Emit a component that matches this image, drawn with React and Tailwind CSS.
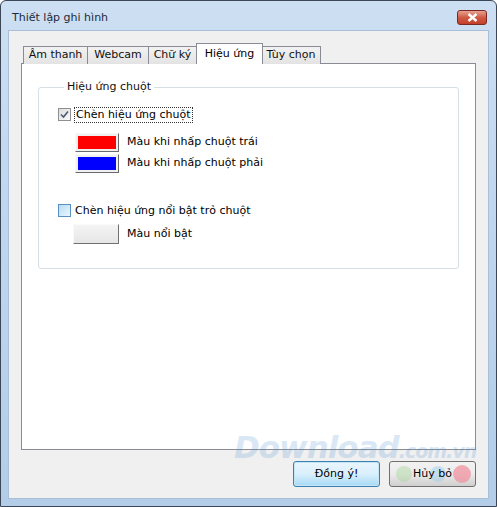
import React from 'react';

const font = { fontFamily: '"DejaVu Sans", "Liberation Sans", sans-serif' };

const CheckBox = ({ checked }) => (
  <div
    className={
      checked
        ? 'w-[13px] h-[13px] border border-[#8f8f8f] bg-gradient-to-br from-[#dcdcdc] to-[#fbfbfb] flex items-center justify-center'
        : 'w-[13px] h-[13px] border border-[#5a8fc4] bg-gradient-to-br from-[#b7dcf3] to-[#eaf6fd] p-[2px]'
    }
  >
    {checked && (
      <svg width="9" height="9" viewBox="0 0 9 9">
        <path d="M1 4.5 L3.5 7 L8 1.5" fill="none" stroke="#4a5a76" strokeWidth="1.6" />
      </svg>
    )}
  </div>
);

const ColorButton = ({ color }) => (
  <div className="w-[44px] h-[19px] border border-t-[#f8f8f8] border-l-[#f8f8f8] border-r-[#6a6a6a] border-b-[#6a6a6a] bg-[#f0f0f0] p-[2px]">
    <div className={'w-full h-full ' + color} />
  </div>
);

const tabs = [
  { label: 'Âm thanh', w: 'w-[65px]' },
  { label: 'Webcam', w: 'w-[62px]' },
  { label: 'Chữ ký', w: 'w-[49px]' },
  { label: 'Hiệu ứng', w: 'w-[67px]', active: true },
  { label: 'Tùy chọn', w: 'w-[60px]' },
];

export default function App() {
  return (
    <div className="w-[497px] h-[507px] bg-white" style={font}>
      <div className="relative w-[497px] h-[507px] flex flex-col rounded-t-[6px] border border-[#3b4656] bg-gradient-to-b from-[#cddff2] via-[#bed5ee] to-[#b3cde8]">
        {/* title bar */}
        <div className="h-[29px] flex items-start justify-between pl-[11px] pr-[9px] pt-[10px]">
          <span className="text-[11px] leading-[14px] text-[#1e2a3a]">Thiết lập ghi hình</span>
          <div className="w-[30px] h-[15px] -mt-px rounded-[3px] border border-[#7a2a22] bg-gradient-to-b from-[#e6a192] via-[#cf5b45] to-[#c3402a] flex items-center justify-center">
            <svg width="11" height="9" viewBox="0 0 11 9">
              <path d="M1.5 1 L9.5 8 M9.5 1 L1.5 8" stroke="white" strokeWidth="2.4" />
            </svg>
          </div>
        </div>

        {/* client area */}
        <div className="relative flex-1 mx-[7px] mb-[7px] bg-[#f0f0f0] border border-[#a7bfd8] flex flex-col px-[12px] pt-[12px]">
          {/* watermark */}
          <div className="absolute z-20 left-[225px] top-[403px] leading-[26px] text-[31px] font-bold italic tracking-[-1px] text-[#4a8cd0] opacity-20 pointer-events-none select-none">
            Download<span className="text-[19px]">.com.vn</span>
          </div>

          {/* tabs */}
          <div className="flex items-end h-[21px] pl-[2px] relative z-10">
            {tabs.map((t) => (
              <div
                key={t.label}
                className={
                  t.active
                    ? t.w + ' h-[21px] -mx-[1px] border border-b-0 border-[#898c95] bg-white text-[11px] text-black flex justify-center pt-[2px] relative z-10'
                    : t.w + ' h-[18px] border border-b-0 border-[#898c95] bg-gradient-to-b from-[#f2f2f2] to-[#e3e3e3] text-[11px] text-[#111] flex items-center justify-center -ml-px first:ml-0'
                }
              >
                {t.label}
              </div>
            ))}
          </div>
          <div className="relative h-[387px] -mt-px border border-[#898c95] bg-white px-[16px] pt-[15px]">
            <fieldset className="h-[190px] border border-[#d5dfe5] rounded-[3px] pl-[19px] pr-[10px]">
              <legend className="ml-[6px] px-[3px] text-[11px] text-[#111]">Hiệu ứng chuột</legend>
              <div className="flex items-center gap-[3px] mt-[11px]">
                <CheckBox checked />
                <span className="text-[11px] text-black border border-dotted border-[#333] px-[1px] leading-[14px]">
                  Chèn hiệu ứng chuột
                </span>
              </div>
              <div className="flex items-center gap-[8px] mt-[10px] ml-[17px]">
                <ColorButton color="bg-[#ff0000]" />
                <span className="text-[11px] text-black">Màu khi nhấp chuột trái</span>
              </div>
              <div className="flex items-center gap-[8px] mt-[2px] ml-[17px]">
                <ColorButton color="bg-[#0000ff]" />
                <span className="text-[11px] text-black">Màu khi nhấp chuột phải</span>
              </div>
              <div className="flex items-center gap-[4px] mt-[30px]">
                <CheckBox />
                <span className="text-[11px] text-black">Chèn hiệu ứng nổi bật trỏ chuột</span>
              </div>
              <div className="flex items-center gap-[8px] mt-[5px] ml-[15px]">
                <div className="w-[46px] h-[20px] border border-t-[#fafafa] border-l-[#fafafa] border-r-[#707070] border-b-[#707070] bg-gradient-to-b from-[#f4f4f4] to-[#e6e6e6]" />
                <span className="text-[11px] text-black">Màu nổi bật</span>
              </div>
            </fieldset>
          </div>

          {/* buttons */}
          <div className="relative z-30 flex justify-end gap-[9px] mt-[11px]">
            <button className="w-[87px] h-[26px] rounded-[3px] border border-[#3c7fb1] bg-gradient-to-b from-[#eaf6fd] via-[#d9f0fc] to-[#a7d9f5] text-[11px] text-black shadow-[inset_0_0_0_1px_#c4e5f6]">
              Đồng ý!
            </button>
            <button className="relative w-[87px] h-[26px] rounded-[3px] border border-[#707070] bg-gradient-to-b from-[#f2f2f2] via-[#ebebeb] to-[#cfcfcf] text-[11px] text-black">
              <span className="absolute left-[6px] top-[4px] w-[16px] h-[16px] rounded-full bg-[#9fd58f] opacity-40" />
              <span className="absolute left-[40px] top-[4px] w-[16px] h-[16px] rounded-full bg-[#8ec8ef] opacity-40" />
              <span className="absolute right-[4px] top-[3px] w-[18px] h-[18px] rounded-full bg-[#f08d9a] opacity-70" />
              <span className="relative">Hủy bỏ</span>
            </button>
          </div>
        </div>
      </div>
    </div>
  );
}
